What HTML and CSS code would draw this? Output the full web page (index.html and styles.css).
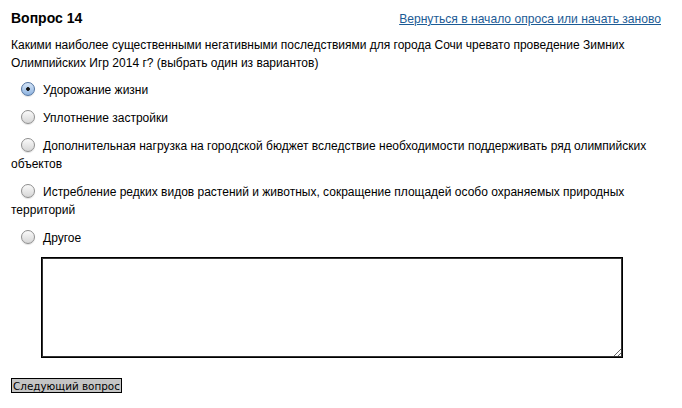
FILE: index.html
```html
<!DOCTYPE html>
<html lang="ru">
<head>
<meta charset="utf-8">
<title>Вопрос 14</title>
<link rel="stylesheet" href="styles.css">
</head>
<body>
<div class="page">
  <div class="header">
    <h1 class="title">Вопрос 14</h1>
    <a class="restart" href="#">Вернуться в начало опроса или начать заново</a>
  </div>
  <p class="question">Какими наиболее существенными негативными последствиями для города Сочи чревато проведение Зимних Олимпийских Игр 2014 г? (выбрать один из вариантов)</p>
  <form class="answers">
    <label class="option"><input class="radio" type="radio" name="q14" checked><span class="gap"></span>Удорожание жизни</label>
    <label class="option"><input class="radio" type="radio" name="q14"><span class="gap"></span>Уплотнение застройки</label>
    <label class="option"><input class="radio" type="radio" name="q14"><span class="gap"></span>Дополнительная нагрузка на городской бюджет вследствие необходимости поддерживать ряд олимпийских объектов</label>
    <label class="option"><input class="radio" type="radio" name="q14"><span class="gap"></span>Истребление редких видов растений и животных, сокращение площадей особо охраняемых природных территорий</label>
    <label class="option"><input class="radio" type="radio" name="q14"><span class="gap"></span>Другое</label>
    <textarea class="other"></textarea>
    <div class="actions"><button class="next" type="button">Следующий вопрос</button></div>
  </form>
</div>
</body>
</html>
```

FILE: styles.css
```css
html, body {
  margin: 0;
  padding: 0;
  background: #fff;
}
.page {
  padding: 9px 11px 0 11px;
  width: 650px;
  font-family: "Liberation Sans", Arial, sans-serif;
  font-size: 12px;
  color: #000;
}
.header {
  display: flex;
  justify-content: space-between;
  align-items: baseline;
}
.title {
  margin: 0;
  font-size: 14px;
  font-weight: bold;
  line-height: 18px;
}
.restart {
  color: #1c5b95;
  text-decoration: underline;
  font-size: 12.1px;
  line-height: 18px;
}
.question {
  margin: 8px 0 0 0;
  line-height: 18px;
}
.answers {
  margin: 9px 0 0 0;
  display: flex;
  flex-direction: column;
}
.option {
  display: block;
  line-height: 18px;
  margin-bottom: 10px;
}
.radio {
  -webkit-appearance: none;
  appearance: none;
  width: 14px;
  height: 14px;
  margin: 0 0 0 10px;
  border-radius: 50%;
  border: 1px solid #8e8e8e;
  background: linear-gradient(#fafafa, #d6d6d6);
  box-shadow: 0 1px 1px rgba(0, 0, 0, 0.12);
  box-sizing: border-box;
  vertical-align: -2px;
}
.radio:checked {
  border-color: #50729f;
  background: radial-gradient(circle, #111 0, #111 1.5px, transparent 2.2px), linear-gradient(#d4e4f7, #8fb4e0);
}
.gap {
  display: inline-block;
  width: 8px;
}
.other {
  margin: 0 0 0 30px;
  width: 582px;
  height: 101px;
  box-sizing: border-box;
  border: 1px solid #000;
  box-shadow: inset 0 0 0 1px #333;
  resize: both;
  padding: 2px;
  font-family: "Liberation Sans", Arial, sans-serif;
}
.actions {
  margin-top: 20px;
}
.next {
  margin: 0;
  padding: 0 1px;
  height: 15px;
  border: 1px solid #000;
  border-radius: 0;
  background: #c4c4c4;
  font-family: "DejaVu Sans", Verdana, sans-serif;
  font-size: 10.4px;
  line-height: 12px;
  color: #000;
}
```
